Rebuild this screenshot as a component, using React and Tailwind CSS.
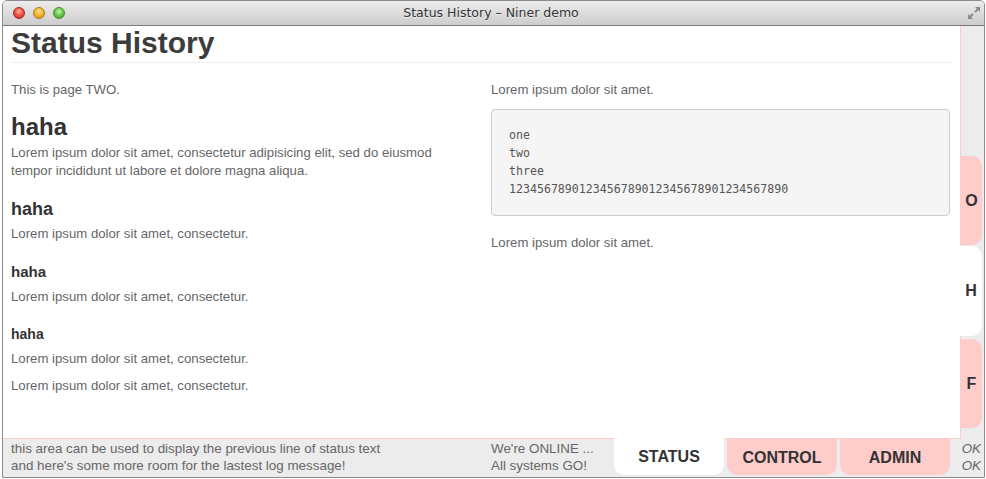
import React from 'react'

// Status History window — Niner demo
// - mac-style title bar, two column page body, side tabs and bottom tabs
const sideTabs = [
    { id: 'o', label: 'O', active: false },
    { id: 'h', label: 'H', active: true },
    { id: 'f', label: 'F', active: false },
]

const bottomTabs = [
    { id: 'status', label: 'STATUS', active: true },
    { id: 'control', label: 'CONTROL', active: false },
    { id: 'admin', label: 'ADMIN', active: false },
]

function TrafficLight({ color }) {
    const styles = {
        red: 'bg-[radial-gradient(circle_at_50%_35%,#ffb0a6_0%,#f0564c_45%,#c0281f_100%)] border-[#a3281f]',
        yellow: 'bg-[radial-gradient(circle_at_50%_35%,#ffe7a0_0%,#f5b52c_45%,#c98a10_100%)] border-[#b07c1a]',
        green: 'bg-[radial-gradient(circle_at_50%_35%,#c8f5b0_0%,#6cc84c_45%,#3e9a26_100%)] border-[#4a8a30]',
    }
    return <span className={`block w-[12px] h-[12px] rounded-full border ${styles[color]}`} />
}

function ResizeIcon() {
    return (
        <svg width="14" height="14" viewBox="0 0 14 14" className="text-[#8a8a8a]">
            <path d="M8 1h5v5l-1.8-1.8-2.6 2.6-1.4-1.4 2.6-2.6z" fill="currentColor" />
            <path d="M6 13H1V8l1.8 1.8 2.6-2.6 1.4 1.4-2.6 2.6z" fill="currentColor" />
        </svg>
    )
}

export default function App() {
    return (
        <div className="w-[986px] h-[479px] bg-white font-['Liberation_Sans',Arial,sans-serif]">
            <div className="ml-[2px] w-[983px] h-[478px] border border-[#8c8c8c] rounded-t-[5px] overflow-hidden flex flex-col">
                {/* title bar */}
                <div className="h-[25px] shrink-0 border-b border-[#7a7a7a] bg-gradient-to-b from-[#ececec] to-[#cdcdcd] flex items-center relative">
                    <div className="flex items-center gap-[8px] pl-[10px]">
                        <TrafficLight color="red" />
                        <TrafficLight color="yellow" />
                        <TrafficLight color="green" />
                    </div>
                    <div className="flex-1 text-center text-[12.5px] text-[#333] font-['DejaVu_Sans',sans-serif] pr-[50px] [text-shadow:0_1px_0_rgba(255,255,255,0.6)]">
                        Status History – Niner demo
                    </div>
                    <div className="pr-[3px]">
                        <ResizeIcon />
                    </div>
                </div>

                {/* body */}
                <div className="flex h-[413px] shrink-0 bg-[#ececec]">
                    <div className="w-[958px] bg-white border-r border-b border-[#ffcccc] pl-[8px] pr-[9px]">
                        <h1 className="text-[30px] leading-[34px] pb-[2px] font-bold text-[#3c3c3c] border-b border-[#eeeeee]">
                            Status History
                        </h1>
                        <div className="flex gap-[20px] text-[13.2px] leading-[18px] text-[#666]">
                            <div className="w-[460px]">
                                <p className="mt-[18px]">This is page TWO.</p>
                                <h2 className="mt-[11px] text-[24px] leading-[34px] font-bold text-[#333]">haha</h2>
                                <p>
                                    Lorem ipsum dolor sit amet, consectetur adipisicing elit, sed do eiusmod tempor
                                    incididunt ut labore et dolore magna aliqua.
                                </p>
                                <h3 className="mt-[13px] text-[18px] leading-[32px] font-bold text-[#333]">haha</h3>
                                <p>Lorem ipsum dolor sit amet, consectetur.</p>
                                <h4 className="mt-[13px] text-[15px] leading-[32px] font-bold text-[#333]">haha</h4>
                                <p>Lorem ipsum dolor sit amet, consectetur.</p>
                                <h5 className="mt-[12px] text-[14px] leading-[32px] font-bold text-[#333]">haha</h5>
                                <p>Lorem ipsum dolor sit amet, consectetur.</p>
                                <p className="mt-[9px]">Lorem ipsum dolor sit amet, consectetur.</p>
                            </div>
                            <div className="w-[460px]">
                                <p className="mt-[18px]">Lorem ipsum dolor sit amet.</p>
                                <pre className="mt-[10px] w-[459px] bg-[#f5f5f5] border border-[#cccccc] rounded-[4px] px-[17px] pt-[16px] pb-[17px] font-['DejaVu_Sans_Mono',monospace] text-[11.6px] leading-[18px] text-[#555]">
                                    {'one\ntwo\nthree\n1234567890123456789012345678901234567890'}
                                </pre>
                                <p className="mt-[18px]">Lorem ipsum dolor sit amet.</p>
                            </div>
                        </div>
                    </div>

                    {/* side tabs */}
                    <div className="flex-1 flex flex-col pt-[130px]">
                        {sideTabs.map((t, i) => (
                            <div
                                key={t.id}
                                className={`flex items-center justify-center rounded-r-[10px] text-[16px] font-bold text-[#333] ${
                                    t.active ? 'bg-white -ml-px w-[22px] h-[90px] mt-px' : 'bg-[#ffcccc] w-[21px] h-[89px]'
                                } ${i === 2 ? 'mt-[3px]' : ''}`}
                            >
                                {t.label}
                            </div>
                        ))}
                    </div>
                </div>

                {/* status bar */}
                <div className="flex-1 bg-[#ececec] flex text-[13.4px] leading-[17px] text-[#666]">
                    <div className="w-[488px] pl-[8px] pt-px">
                        <div>this area can be used to display the previous line of status text</div>
                        <div>and here's some more room for the lastest log message!</div>
                    </div>
                    <div className="w-[123px] pt-px">
                        <div>We're ONLINE ...</div>
                        <div>All systems GO!</div>
                    </div>
                    <div className="flex gap-[3px]">
                        {bottomTabs.map((t) => (
                            <div
                                key={t.id}
                                className={`w-[110px] flex items-center justify-center rounded-b-[10px] text-[16px] font-bold text-[#333] ${
                                    t.active ? 'bg-white -mt-px h-[37px]' : 'bg-[#ffcccc] h-[36px]'
                                }`}
                            >
                                {t.label}
                            </div>
                        ))}
                    </div>
                    <div className="flex-1 text-right pr-[3px] pt-px italic">
                        <div>OK</div>
                        <div>OK</div>
                    </div>
                </div>
            </div>
        </div>
    )
}
